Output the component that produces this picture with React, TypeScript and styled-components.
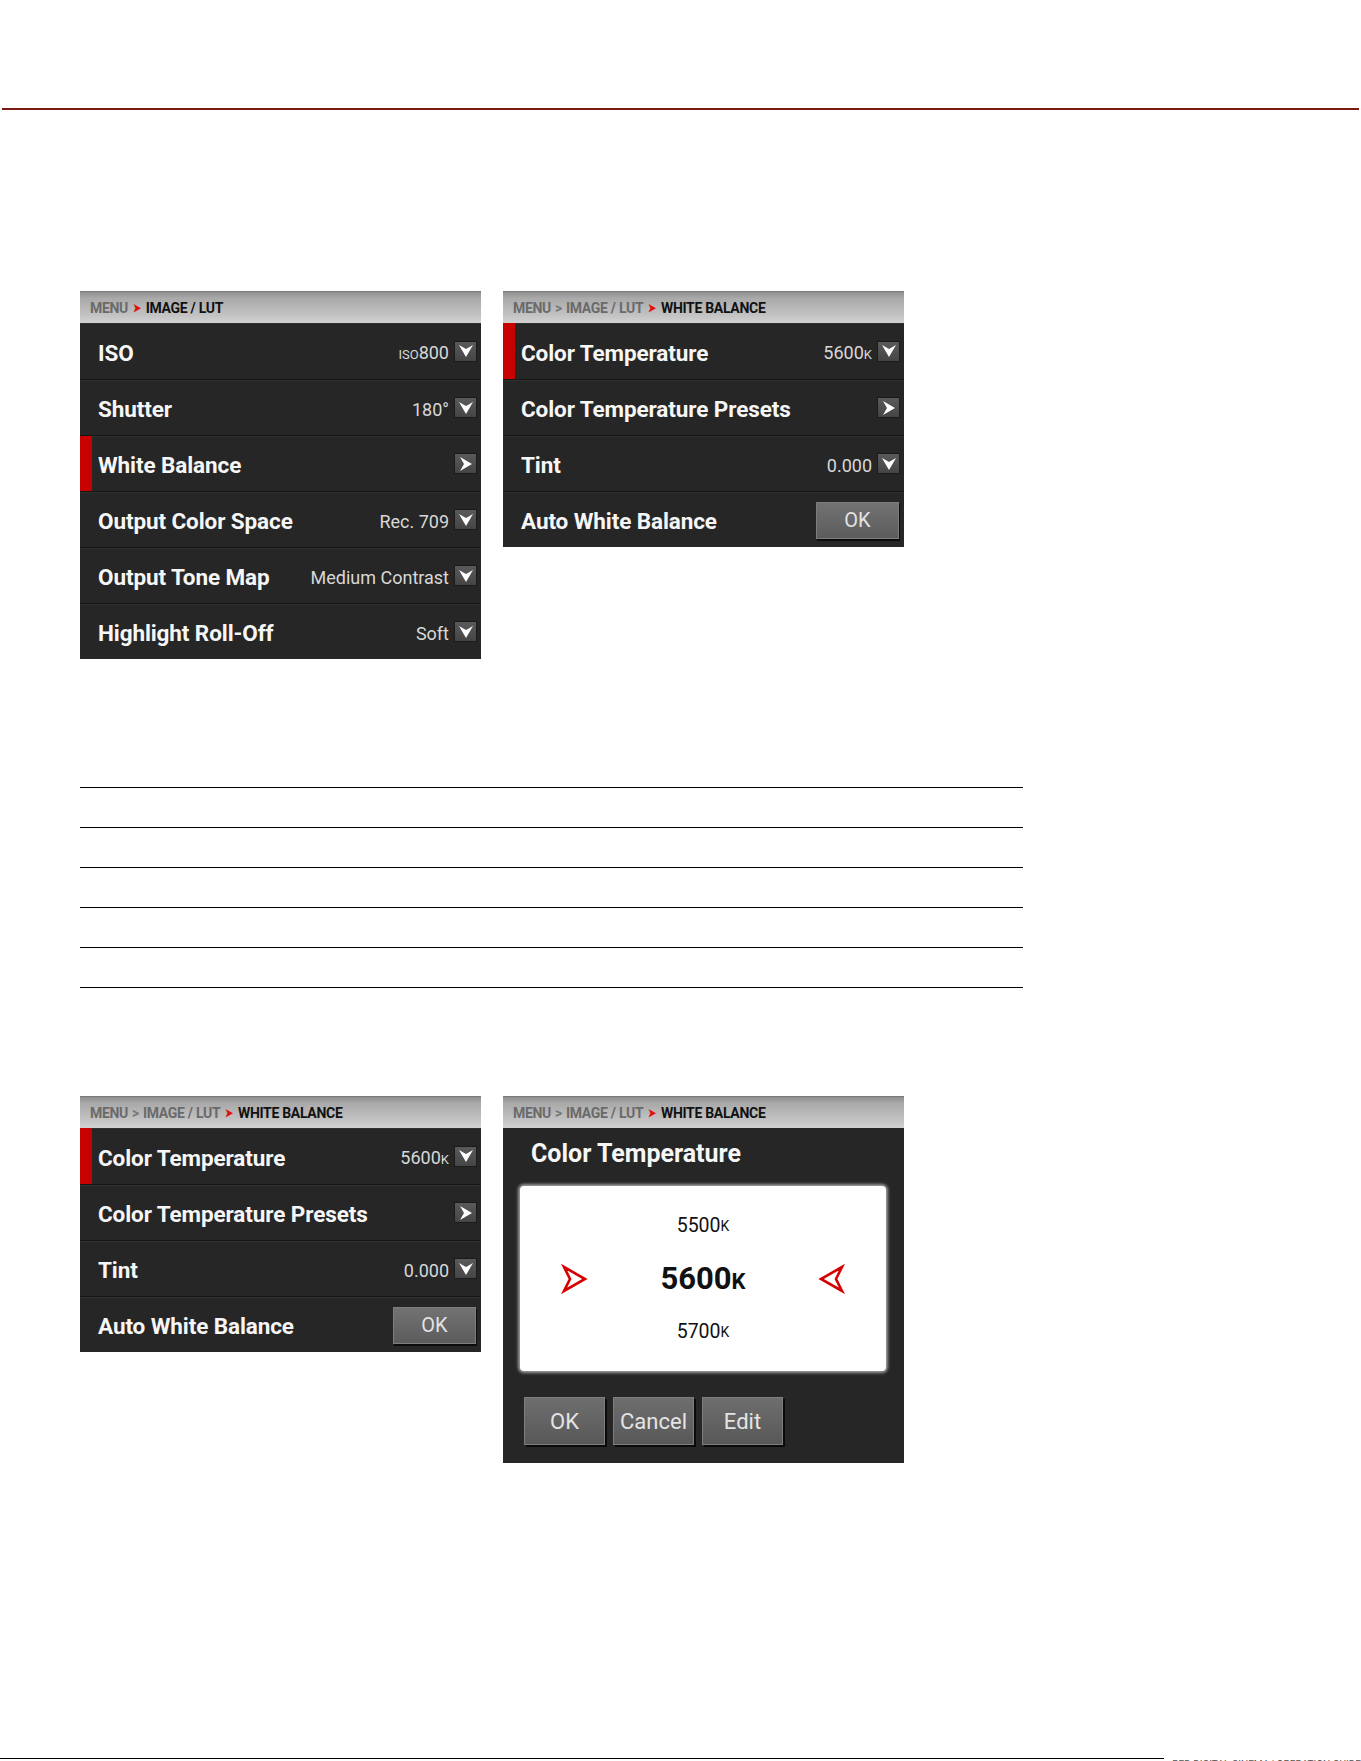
import React from 'react'
import styled, { createGlobalStyle } from 'styled-components'

const GlobalStyle = createGlobalStyle`
    * {
        box-sizing: border-box;
    }
    html, body {
        margin: 0;
        padding: 0;
        height: 1761px;
        overflow: hidden;
        background: #ffffff;
        font-family: Roboto, 'Liberation Sans', sans-serif;
    }
`

const Page = styled.div`
    display: flex;
    flex-direction: column;
    padding-top: 108px;
`

const TopRule = styled.div`
    height: 2px;
    margin: 0 2px;
    background: #7a1a12;
`

const Section = styled.div`
    padding-left: 80px;
    margin-top: ${(p: { $top: number }) => p.$top}px;
`

const PanelRow = styled.div`
    display: flex;
    gap: 22px;
    align-items: flex-start;
`

const Panel = styled.div`
    width: 401px;
    background: #262626;
    display: flex;
    flex-direction: column;
`

const Crumbs = styled.div`
    height: 32px;
    display: flex;
    align-items: center;
    gap: 4px;
    padding-left: 10px;
    background: linear-gradient(#8f8f8f 0, #a9a9a9 20%, #c3c3c3 75%, #d2d2d2 100%);
    border-top: 1px solid #7a7a7a;
    font-size: 14px;
    font-weight: 700;
    letter-spacing: -0.3px;
    text-transform: uppercase;
`

const Crumb = styled.span<{ $current?: boolean }>`
    color: ${(p) => (p.$current ? '#111111' : '#6a6a6a')};
`

const CrumbSep = styled.span<{ $red?: boolean }>`
    color: ${(p) => (p.$red ? '#e01010' : '#777777')};
    font-size: ${(p) => (p.$red ? '12px' : '14px')};
    transform: ${(p) => (p.$red ? 'scaleX(0.8)' : 'none')};
`

const Row = styled.div<{ $selected?: boolean }>`
    height: 56px;
    display: flex;
    align-items: center;
    justify-content: space-between;
    padding: 3px 4px 0 18px;
    border-top: 1px solid #161616;
    box-shadow: ${(p) =>
        p.$selected ? 'inset 12px 0 0 #c70000, inset 0 1px 0 #303030' : 'inset 0 1px 0 #303030'};
    &:first-of-type {
        border-top: none;
    }
`

const Label = styled.span`
    color: #f6f6f6;
    font-size: 22.5px;
    font-weight: 700;
    letter-spacing: -0.1px;
`

const Control = styled.div`
    display: flex;
    align-items: center;
    gap: 5px;
`

const Value = styled.span`
    color: #d8d8d8;
    font-size: 18px;
    font-weight: 400;
`

const Small = styled.span`
    font-size: 13px;
`

const IconBox = styled.span`
    width: 23px;
    height: 21px;
    display: flex;
    align-items: center;
    justify-content: center;
    background: linear-gradient(#5a5a5a, #454545);
    border: 1px solid #1b1b1b;
    margin-bottom: 3px;
`

const OkButton = styled.button`
    width: 83px;
    height: 37px;
    margin: 0 1px 2px 0;
    font-family: Roboto, 'Liberation Sans', sans-serif;
    font-size: 20px;
    color: #e2e2e2;
    background: linear-gradient(#727272, #5c5c5c);
    border: 1px solid #7d7d7d;
    box-shadow: 1px 2px 0 #0b0b0b;
    padding: 0;
`

const DialogBody = styled.div`
    display: flex;
    flex-direction: column;
    padding: 0 18px 18px 17px;
`

const DialogTitle = styled.div`
    height: 52px;
    line-height: 52px;
    margin-bottom: 6px;
    padding-left: 11px;
    color: #f6f6f6;
    font-size: 25px;
    font-weight: 700;
`

const Picker = styled.div`
    height: 185px;
    background: #ffffff;
    border-radius: 4px;
    box-shadow: 0 0 3px 2px rgba(170, 170, 170, 0.9);
    display: flex;
    flex-direction: column;
    justify-content: center;
`

const PickRow = styled.div<{ $main?: boolean }>`
    height: 53px;
    display: flex;
    align-items: center;
    justify-content: ${(p) => (p.$main ? 'space-between' : 'center')};
    padding: 0 41px;
    color: #111111;
    font-size: ${(p) => (p.$main ? '31px' : '19.5px')};
    font-weight: ${(p) => (p.$main ? 700 : 400)};
`

const PickSmall = styled.span<{ $main?: boolean }>`
    font-size: ${(p) => (p.$main ? '22px' : '14px')};
`

const ButtonRow = styled.div`
    display: flex;
    gap: 8px;
    padding-left: 4px;
    margin-top: 26px;
`

const DialogButton = styled.button`
    width: 81px;
    height: 48px;
    font-family: Roboto, 'Liberation Sans', sans-serif;
    font-size: 22px;
    color: #e4e4e4;
    background: linear-gradient(#6e6e6e, #585858);
    border: 1px solid #7e7e7e;
    box-shadow: 2px 2px 0 #0a0a0a;
    padding: 0;
`

const Table = styled.div`
    width: 943px;
    border-bottom: 1px solid #000000;
`

const TableRow = styled.div`
    height: 40px;
    border-top: 1px solid #000000;
`

const Footer = styled.div`
    display: flex;
    align-items: flex-start;
    margin-top: 295px;
`

const FooterRule = styled.div`
    width: 1216px;
    height: 1px;
    background: #000000;
`

const FooterText = styled.span`
    margin-left: 8px;
    margin-top: 1px;
    font-size: 10px;
    color: #555555;
    white-space: nowrap;
`

const Down = () => (
    <svg width="16" height="14" viewBox="0 0 16 14">
        <polygon points="1,1 8,13 15,1 8,5" fill="#ffffff" />
    </svg>
)

const Right = () => (
    <svg width="14" height="16" viewBox="0 0 14 16">
        <polygon points="1,1 13,8 1,15 5,8" fill="#ffffff" />
    </svg>
)

const Pointer = ({ flip }: { flip?: boolean }) => (
    <svg
        width="27"
        height="30"
        viewBox="0 0 27 30"
        style={{ transform: flip ? 'scaleX(-1)' : undefined }}
    >
        <polygon
            points="3,3 24,15 3,27 9,15"
            fill="#ffffff"
            stroke="#d60000"
            strokeWidth="2.6"
            strokeLinejoin="miter"
        />
    </svg>
)

type Item = {
    label: string
    value?: React.ReactNode
    kind: 'drop' | 'next' | 'ok'
    selected?: boolean
}

const mainMenu: Item[] = [
    { label: 'ISO', value: <><Small>ISO</Small>800</>, kind: 'drop' },
    { label: 'Shutter', value: '180°', kind: 'drop' },
    { label: 'White Balance', kind: 'next', selected: true },
    { label: 'Output Color Space', value: 'Rec. 709', kind: 'drop' },
    { label: 'Output Tone Map', value: 'Medium Contrast', kind: 'drop' },
    { label: 'Highlight Roll-Off', value: 'Soft', kind: 'drop' },
]

const wbMenu: Item[] = [
    { label: 'Color Temperature', value: <>5600<Small>K</Small></>, kind: 'drop', selected: true },
    { label: 'Color Temperature Presets', kind: 'next' },
    { label: 'Tint', value: '0.000', kind: 'drop' },
    { label: 'Auto White Balance', kind: 'ok' },
]

const Breadcrumb = ({ deep }: { deep?: boolean }) =>
    deep ? (
        <Crumbs>
            <Crumb>Menu</Crumb>
            <CrumbSep>&gt;</CrumbSep>
            <Crumb>Image / LUT</Crumb>
            <CrumbSep $red>➤</CrumbSep>
            <Crumb $current>White Balance</Crumb>
        </Crumbs>
    ) : (
        <Crumbs>
            <Crumb>Menu</Crumb>
            <CrumbSep $red>➤</CrumbSep>
            <Crumb $current>Image / LUT</Crumb>
        </Crumbs>
    )

const MenuPanel = ({ items, deep }: { items: Item[]; deep?: boolean }) => (
    <Panel>
        <Breadcrumb deep={deep} />
        <div>
            {items.map((it) => (
                <Row key={it.label} $selected={it.selected}>
                    <Label>{it.label}</Label>
                    {it.kind === 'ok' ? (
                        <OkButton>OK</OkButton>
                    ) : (
                        <Control>
                            {it.value && <Value>{it.value}</Value>}
                            <IconBox>{it.kind === 'drop' ? <Down /> : <Right />}</IconBox>
                        </Control>
                    )}
                </Row>
            ))}
        </div>
    </Panel>
)

const TempDialog = () => (
    <Panel>
        <Breadcrumb deep />
        <DialogBody>
            <DialogTitle>Color Temperature</DialogTitle>
            <Picker>
                <PickRow>
                    5500<PickSmall>K</PickSmall>
                </PickRow>
                <PickRow $main>
                    <Pointer />
                    <span>
                        5600<PickSmall $main>K</PickSmall>
                    </span>
                    <Pointer flip />
                </PickRow>
                <PickRow>
                    5700<PickSmall>K</PickSmall>
                </PickRow>
            </Picker>
            <ButtonRow>
                <DialogButton>OK</DialogButton>
                <DialogButton>Cancel</DialogButton>
                <DialogButton>Edit</DialogButton>
            </ButtonRow>
        </DialogBody>
    </Panel>
)

const App = () => (
    <Page>
        <GlobalStyle />
        <TopRule />
        <Section $top={181}>
            <PanelRow>
                <MenuPanel items={mainMenu} />
                <MenuPanel items={wbMenu} deep />
            </PanelRow>
        </Section>
        <Section $top={128}>
            <Table>
                {[0, 1, 2, 3, 4].map((i) => (
                    <TableRow key={i} />
                ))}
            </Table>
        </Section>
        <Section $top={108}>
            <PanelRow>
                <MenuPanel items={wbMenu} deep />
                <TempDialog />
            </PanelRow>
        </Section>
        <Footer>
            <FooterRule />
            <FooterText>RED DIGITAL CINEMA | OPERATION GUIDE</FooterText>
        </Footer>
    </Page>
)

export default App
